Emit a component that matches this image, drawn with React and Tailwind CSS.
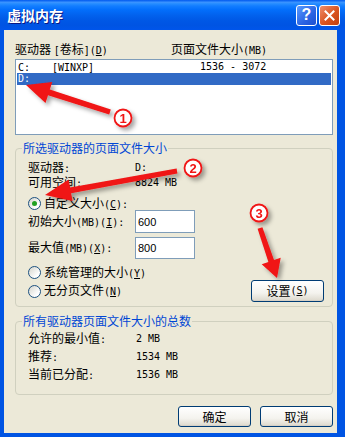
import React from 'react';

const M = ({ children }) => (
  <span className="font-['DejaVu_Sans_Mono',monospace] text-[10px]">{children}</span>
);

const Radio = ({ checked, children }) => (
  <div className="flex items-center h-[13px]">
    <span className="w-[13px] h-[13px] rounded-full border border-[#1c5180] bg-[linear-gradient(135deg,#d4d4cc,#ffffff_75%)] flex items-center justify-center">
      {checked && <span className="w-[5px] h-[5px] rounded-full bg-[#21a121]" />}
    </span>
    <span className="ml-[3px]">{children}</span>
  </div>
);

const XpButton = ({ children, className = '' }) => (
  <div
    className={`h-[21px] rounded-[3px] border border-[#003c74] bg-[linear-gradient(to_bottom,#ffffff,#f4f3ee_60%,#dcd8cc)] shadow-[inset_0_-1px_0_#d6d0c5] flex items-center justify-center ${className}`}
  >
    {children}
  </div>
);

const Field = ({ value }) => (
  <div className="w-[60px] h-full border border-[#7f9db9] bg-white flex items-center pl-[2px] font-['Liberation_Sans',sans-serif] text-[11px]">
    {value}
  </div>
);

const Arrow = ({ points }) => (
  <polygon points={points} fill="#f01414" />
);

const Badge = ({ cx, cy, n }) => (
  <g>
    <circle cx={cx} cy={cy} r="8.5" fill="#fff" stroke="#f01414" strokeWidth="1.8" />
    <text
      x={cx}
      y={cy + 4.5}
      textAnchor="middle"
      fontSize="13"
      fontWeight="bold"
      fontFamily="Liberation Sans, sans-serif"
      fill="#f01414"
    >
      {n}
    </text>
  </g>
);

export default function App() {
  return (
    <div className="relative w-[345px] h-[439px] bg-white overflow-hidden font-['Noto_Sans_CJK_SC',sans-serif] text-[12px] leading-[12px] text-black">
      <div className="w-[345px] h-[437px] flex flex-col">
        {/* title bar */}
        <div className="h-[30px] flex items-center pl-[7px] pr-[5px] bg-[linear-gradient(to_bottom,#0058ee_0%,#3a93ff_8%,#288eff_12%,#127dff_20%,#036ffc_32%,#0262ee_50%,#0057e5_70%,#0054e3_85%,#0055eb_100%)]">
          <span className="text-white text-[14px] leading-[14px] font-bold [text-shadow:1px_1px_#0a1883]">
            虚拟内存
          </span>
          <div className="ml-auto flex gap-[2px]">
            <div className="w-[21px] h-[21px] rounded-[3px] border border-white bg-[linear-gradient(135deg,#5a9bff,#2a63e3_60%,#1c4fd0)] flex items-center justify-center text-white font-bold text-[16px] leading-[16px] font-['Liberation_Sans',sans-serif]">
              ?
            </div>
            <div className="w-[21px] h-[21px] rounded-[3px] border border-white bg-[linear-gradient(135deg,#ef8e6c,#d9531f_55%,#c2400f)] flex items-center justify-center">
              <svg width="11" height="11" viewBox="0 0 11 11">
                <path d="M1.5 1.5 L9.5 9.5 M9.5 1.5 L1.5 9.5" stroke="#fff" strokeWidth="2" strokeLinecap="square" />
              </svg>
            </div>
          </div>
        </div>

        {/* body */}
        <div className="flex-1 bg-[#ece9d8] border-l-[4px] border-r-[8px] border-b-[4px] border-[#0054e3] pl-[11px] pr-[4px]">
          <div className="flex mt-[13px] h-[14px] items-center">
            <span className="w-[156px]">
              驱动器 <M>[</M>卷标<M>](<u>D</u>)</M>
            </span>
            <span>
              页面文件大小<M>(MB)</M>
            </span>
          </div>

          {/* list box */}
          <div className="mt-[2px] h-[76px] w-[318px] border border-[#7f9db9] bg-white pt-[1px] px-[1px]">
            <div className="flex h-[12px] items-center pl-[1px]">
              <span className="w-[34px]"><M>C:</M></span>
              <span className="w-[148px]"><M>[WINXP]</M></span>
              <M>1536 - 3072</M>
            </div>
            <div className="flex h-[12px] items-center pl-[1px] bg-[#316ac5] text-white">
              <M>D:</M>
            </div>
          </div>

          {/* group 1 */}
          <fieldset className="mt-[7px] w-[318px] border border-[#d0d0bf] rounded-[4px] p-0 pb-[4px]">
            <legend className="ml-[6px] px-[1px] text-[#0046d5] leading-[12px]">
              所选驱动器的页面文件大小
            </legend>
            <div className="pl-[12px] pr-[8px] pt-[8px]">
              <div className="flex h-[12px] items-center">
                <span className="w-[107px]">驱动器<M>:</M></span>
                <M>D:</M>
              </div>
              <div className="flex h-[12px] items-center mt-[3px]">
                <span className="w-[107px]">可用空间<M>:</M></span>
                <M>8824 MB</M>
              </div>
              <div className="mt-[8px]">
                <Radio checked>
                  自定义大小<M>(<u>C</u>):</M>
                </Radio>
              </div>
              <div className="flex h-[23px] items-center">
                <span className="w-[107px]">初始大小<M>(MB)(<u>I</u>):</M></span>
                <Field value="600" />
              </div>
              <div className="flex h-[22px] items-center mt-[4px]">
                <span className="w-[107px]">最大值<M>(MB)(<u>X</u>):</M></span>
                <Field value="800" />
              </div>
              <div className="mt-[7px]">
                <Radio>
                  系统管理的大小<M>(<u>Y</u>)</M>
                </Radio>
              </div>
              <div className="flex h-[22px] items-center justify-between mt-[1px]">
                <Radio>
                  无分页文件<M>(<u>N</u>)</M>
                </Radio>
                <XpButton className="w-[73px] h-[22px]">
                  设置<M>(<u>S</u>)</M>
                </XpButton>
              </div>
            </div>
          </fieldset>

          {/* group 2 */}
          <fieldset className="mt-[8px] w-[318px] border border-[#d0d0bf] rounded-[4px] p-0 pb-[13px]">
            <legend className="ml-[6px] px-[1px] text-[#0046d5] leading-[12px]">
              所有驱动器页面文件大小的总数
            </legend>
            <div className="pl-[12px] pt-[6px] flex flex-col gap-[6px]">
              <div className="flex h-[12px] items-center">
                <span className="w-[108px]">允许的最小值<M>:</M></span>
                <M>2 MB</M>
              </div>
              <div className="flex h-[12px] items-center">
                <span className="w-[108px]">推荐<M>:</M></span>
                <M>1534 MB</M>
              </div>
              <div className="flex h-[12px] items-center">
                <span className="w-[108px]">当前已分配<M>:</M></span>
                <M>1536 MB</M>
              </div>
            </div>
          </fieldset>

          <div className="mt-[11px] flex justify-end gap-[9px]">
            <XpButton className="w-[73px]">确定</XpButton>
            <XpButton className="w-[73px]">取消</XpButton>
          </div>
        </div>
      </div>

      {/* annotations */}
      <svg className="absolute left-0 top-0 pointer-events-none" width="345" height="439" viewBox="0 0 345 439">
        <defs>
          <filter id="sh" x="-20%" y="-20%" width="140%" height="140%">
            <feDropShadow dx="3" dy="3" stdDeviation="2" floodColor="#000" floodOpacity="0.35" />
          </filter>
        </defs>
        <g filter="url(#sh)">
          <Arrow points="26,85 52.3,81.9 49.8,89.5 110.8,109.6 109.2,114.4 48,95.3 45.5,102.9" />
          <Arrow points="45,195 68.6,179.5 70.1,187.4 176.6,168.5 177.4,173.5 71.1,193.3 72.6,201.1" />
          <Arrow points="277,278 261.7,264.2 268.4,262 257.6,228.8 262.4,227.2 274,260 280.7,257.8" />
          <Badge cx={123} cy={118} n="1" />
          <Badge cx={193} cy={168} n="2" />
          <Badge cx={259} cy={213} n="3" />
        </g>
      </svg>
    </div>
  );
}
